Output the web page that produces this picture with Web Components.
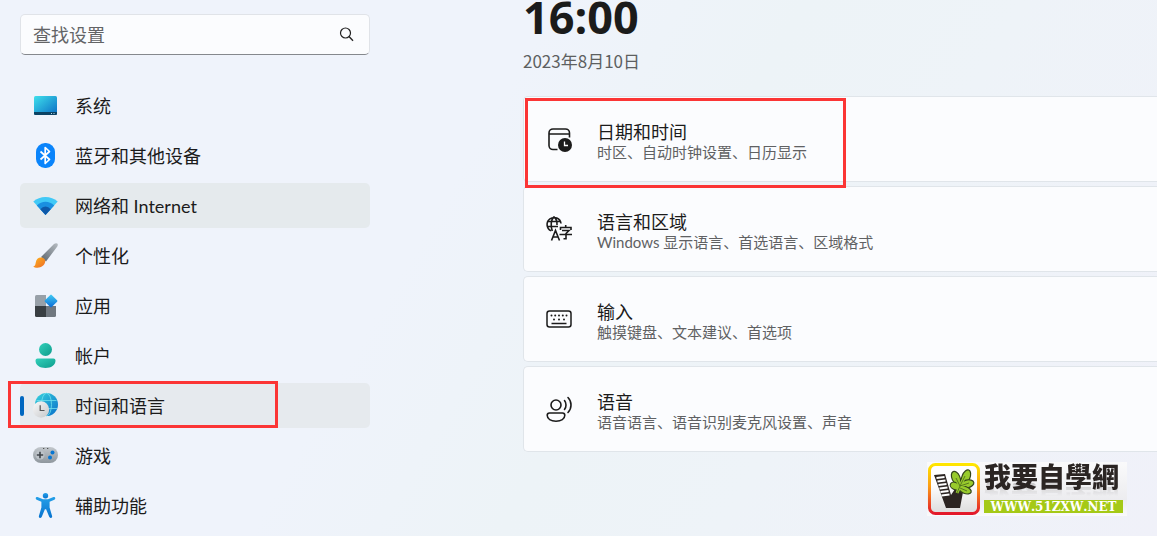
<!DOCTYPE html>
<html lang="zh-CN">
<head>
<meta charset="utf-8">
<title>设置 - 时间和语言</title>
<style>
html { min-height: 100%; background: linear-gradient(120deg, #eff3fb 0%, #eff3fb 38%, #edf3f7 55%, #eef3f8 70%, #f0f1f9 100%); }
body { margin: 0; font-family: "Noto Sans CJK SC", sans-serif; color: #1b1b1b; }
</style>
</head>
<body>
<settings-app></settings-app>
<script>
const icons = {
  system: `<svg viewBox="0 0 25 25"><defs><linearGradient id="a" x1="0" y1="0" x2="1" y2="1"><stop stop-color="#3fe0ec"/><stop offset="1" stop-color="#0a6cc4"/></linearGradient></defs><rect x="1" y="3" width="23" height="19" rx="1.5" fill="url(#a)"/><path d="M1 19h23v1.5a1.5 1.5 0 0 1-1.500 1.500h-20A1.500 1.500 0 0 1 1 20.500z" fill="#0c4263"/><path d="M18 20.500h1M20.500 20.500h1" stroke="#b6dcf0"/></svg>`,
  bluetooth: `<svg viewBox="0 0 25 25"><rect x="3" y="0" width="19" height="25" rx="9" fill="#0a84fb"/><path d="M7.500 8.500l9 8-4.300 4V4.500l4.300 4-9 8" fill="none" stroke="#fff" stroke-width="1.700" stroke-linejoin="round"/></svg>`,
  network: `<svg viewBox="0 0 25 25"><path d="M12.500 22L.3 8.600Q5.500 4 12.500 4t12.200 4.600z" fill="#41c9f6"/><path d="M12.500 22L3.800 12.400Q7.800 8.800 12.500 8.800t8.700 3.600z" fill="#1a8fe0"/><path d="M12.500 22L7.300 16.200Q9.500 13.600 12.500 13.600t5.200 2.600z" fill="#0e58a8"/></svg>`,
  brush: `<svg viewBox="0 0 25 25"><defs><linearGradient id="b" x1="1" y1="0" x2="0" y2="1"><stop stop-color="#b6bcc2"/><stop offset="1" stop-color="#5c656e"/></linearGradient><linearGradient id="c" x1="0" y1="0" x2="1" y2="1"><stop stop-color="#ffb51c"/><stop offset="1" stop-color="#ec6b28"/></linearGradient></defs><path d="M8 14L21 1Q23-.3 24.200.6T24.300 3.500L13 18.500z" fill="url(#b)"/><path d="M12.200 18.500c-.6 4-4 6.200-7.700 6.200-2 0-3.500-.5-4.300-1.300 2-.4 2.200-1.700 2.500-3.700.4-3.500 2.800-5.300 5.300-5.200 2.500.1 4.500 1.700 4.200 4z" fill="url(#c)"/></svg>`,
  apps: `<svg viewBox="0 0 25 25"><defs><linearGradient id="d" x1="0" y1="0" x2="1" y2="1"><stop stop-color="#43cdf5"/><stop offset="1" stop-color="#0868d4"/></linearGradient></defs><path d="M3.500 2H13v11H2V3.500A1.500 1.500 0 0 1 3.500 2z" fill="#98a0a8"/><path d="M2 13h11v11H3.500A1.500 1.500 0 0 1 2 22.500z" fill="#393e42"/><path d="M13 13h10v9.500a1.500 1.500 0 0 1-1.500 1.500H13z" fill="#70777f"/><rect x="13.200" y="3.200" width="9.600" height="9.600" rx="1" transform="rotate(45 18 8)" fill="url(#d)"/></svg>`,
  account: `<svg viewBox="0 0 25 25"><defs><linearGradient id="e" x1="0" y1="0" x2="1" y2="1"><stop stop-color="#32d0ba"/><stop offset="1" stop-color="#0e9c8c"/></linearGradient></defs><circle cx="12.500" cy="6.500" r="6.500" fill="url(#e)"/><path d="M4.500 15.500h16a2 2 0 0 1 2 2c0 4.800-4.500 7.500-10 7.500s-10-2.700-10-7.500a2 2 0 0 1 2-2z" fill="url(#e)"/></svg>`,
  time: `<svg viewBox="0 0 25 25"><defs><linearGradient id="f" x1="0" y1="0" x2="1" y2="1"><stop stop-color="#38d3dd"/><stop offset="1" stop-color="#0870ca"/></linearGradient><linearGradient id="g" x1="0" y1="0" x2="1" y2="1"><stop stop-color="#fafafa"/><stop offset="1" stop-color="#c6c8ca"/></linearGradient></defs><circle cx="13.500" cy="11.500" r="11.500" fill="url(#f)"/><g fill="none" stroke="#70e1ee" stroke-width=".8"><ellipse cx="13.500" cy="11.500" rx="5" ry="11.300"/><path d="M3.500 7.500h20M3 15.500h21"/></g><circle cx="8" cy="16.500" r="8.200" fill="url(#g)"/><path d="M7.200 12.300v5.200h4.300" fill="none" stroke="#555" stroke-width="1.200"/></svg>`,
  game: `<svg viewBox="0 0 25 25"><defs><linearGradient id="h" x1="0" y1="0" x2="0" y2="1"><stop stop-color="#c2c7cc"/><stop offset="1" stop-color="#8f979e"/></linearGradient></defs><rect x="0" y="4" width="25" height="16" rx="8" fill="url(#h)"/><circle cx="7" cy="12" r="4.500" fill="#bdc3c9"/><path d="M7 8.800v6.400M3.800 12h6.400" stroke="#40464b" stroke-width="1.600"/><path d="M10 5.500h1.300M14 5.500h1.300" stroke="#555"/><circle cx="19.500" cy="9.500" r="2" fill="#0876d2"/><circle cx="17" cy="14.500" r="2" fill="#0876d2"/></svg>`,
  access: `<svg viewBox="0 0 25 25"><defs><linearGradient id="i" x1="0" y1="0" x2="0" y2="1"><stop stop-color="#249fe8"/><stop offset="1" stop-color="#0873cf"/></linearGradient></defs><g fill="url(#i)"><circle cx="12.500" cy="2.700" r="2.700"/><path d="M4.500 4.100L10 6.300h5l5.500-2.200c1.800-.6 2.500 1.900.9 2.600L16.600 8.700v5.800l2.500 8.400c.5 2-2.200 2.800-2.900.9l-3.100-7.600h-1.200l-3.100 7.600c-.7 1.900-3.400 1.100-2.900-.9l2.500-8.400V8.700L3.600 6.700C2 6 2.700 3.500 4.500 4.100z"/></g></svg>`,
  date: `<svg viewBox="0 0 26 26"><g fill="none" stroke="#1b1b1b" stroke-width="1.600"><path d="M11.500 23.500H7a4 4 0 0 1-4-4V7a4 4 0 0 1 4-4h12.500a4 4 0 0 1 4 4v4.500M3 8h20.500"/></g><circle cx="19" cy="19" r="7" fill="#1b1b1b"/><path d="M18.500 15.500v4H22" fill="none" stroke="#fff" stroke-width="1.300"/></svg>`,
  region: `<svg viewBox="0 0 26 26"><g fill="none" stroke="#1b1b1b" stroke-width="1.600"><path d="M5 14.800A7 7 0 1 1 15 7.500M1 5.500h13.500M1 10.500h11M6.300 15C4.300 10 5 3 8 1c2.300 1.800 3.200 5 3 8M5.500 24.500L9.500 14.500l4 10M6.900 21h5.200M14.500 14v-2.500h10.500V14M19.700 9v2.500M16 14.500h7l-3 3v5.300h-2.500M13.500 18.500H26"/></g></svg>`,
  keyboard: `<svg viewBox="0 0 26 26"><rect x="1" y="5" width="24" height="16" rx="2.500" fill="none" stroke="#1b1b1b" stroke-width="1.500"/><g fill="#1b1b1b"><circle cx="5.500" cy="9.500" r="1"/><circle cx="9.200" cy="9.500" r="1"/><circle cx="13" cy="9.500" r="1"/><circle cx="16.800" cy="9.500" r="1"/><circle cx="20.500" cy="9.500" r="1"/><circle cx="8" cy="13.500" r="1"/><circle cx="13" cy="13.500" r="1"/><circle cx="18" cy="13.500" r="1"/></g><path d="M5.500 17.500h15" stroke="#1b1b1b" stroke-width="1.500"/></svg>`,
  voice: `<svg viewBox="0 0 26 26"><g fill="none" stroke="#1b1b1b" stroke-width="1.600" stroke-linecap="round"><circle cx="10" cy="9" r="5"/><path d="M3.500 17h13c1.500 0 2.300 1 2.300 2.300 0 3.700-3.800 5.900-8.800 5.900s-8.800-2.200-8.800-5.900C1.200 18 2 17 3.500 17zM18.500 4.500c2 2.500 2 6.500 0 9M22 1.500c4 4 4 11 0 15"/></g></svg>`,
  search: `<svg viewBox="0 0 15 15"><circle cx="6.500" cy="6" r="5" fill="none" stroke="#222" stroke-width="1.200"/><path d="M10 9.500l4 4.300" stroke="#222" stroke-width="1.300"/></svg>`,
  sprout: `<svg viewBox="0 0 52 52"><defs><linearGradient id="j" x1="0" y1="0" x2="0" y2="1"><stop stop-color="#ffe600"/><stop offset=".45" stop-color="#fb9b16"/><stop offset="1" stop-color="#e3192b"/></linearGradient><linearGradient id="k" x1="0" y1="0" x2="0" y2="1"><stop offset=".4" stop-color="#fff"/><stop offset="1" stop-color="#dcdcdc"/></linearGradient></defs><rect x="1.500" y="1.500" width="49" height="49" rx="6" fill="url(#k)" stroke="url(#j)" stroke-width="3"/><path d="M6 12l11-1 6 21 4-6 8 3-3 16H18z" fill="#2c2522"/><g stroke="#fff" stroke-width="2"><path d="M8.500 15l8-1M9.500 18.500l8-1M10.500 22l8-1M11.500 25.500l8-1M12.500 29l8-1M13.500 32.500l8-1"/></g><g fill="#98cb2c" stroke="#33451a" stroke-width="1.200"><ellipse cx="28" cy="15" rx="4" ry="7" transform="rotate(-24 28 15)"/><ellipse cx="38" cy="14" rx="4" ry="7.500" transform="rotate(22 38 14)"/><ellipse cx="39" cy="21" rx="7" ry="4" transform="rotate(-14 39 21)"/><ellipse cx="37" cy="27" rx="6.500" ry="3.500" transform="rotate(20 37 27)"/><ellipse cx="27" cy="23" rx="5" ry="3.500" transform="rotate(25 27 23)"/></g><path d="M29 30l3-7 6-12M32 23l-5-10M32 23l10-3M32 25l8 3M31 26l-6-4" stroke="#98cb2c" stroke-width="3" fill="none"/><path d="M29 30l3-7 5-10M32 23l-4-8M32 23l9-3M32 25l7 3" stroke="#48651c" stroke-width=".8" fill="none"/></svg>`
};

function define(name, markup) {
  customElements.define(name, class extends HTMLElement {
    connectedCallback() {
      if (this.shadowRoot) return;
      this.attachShadow({ mode: 'open' }).innerHTML = markup(this);
    }
  });
}

define('ui-icon', el => `<style>:host{display:block;flex:none}svg{display:block;width:100%;height:100%;overflow:visible}</style>${icons[el.getAttribute('name')]}`);

define('highlight-frame', () => `<style>:host{position:absolute;z-index:2;box-sizing:border-box;border:3px solid #fb3535;pointer-events:none}</style>`);

define('search-box', () => `<style>
:host{display:block}
label{display:flex;align-items:center;height:41px;box-sizing:border-box;padding:0 15px 0 12px;background:#fbfcfe;border:1px solid #e0e3e8;border-bottom-color:#85888d;border-radius:5px}
input{flex:1;min-width:0;padding:0 0 2px;border:0;outline:0;background:none;font:18px/24px "Noto Sans CJK SC",sans-serif;color:#1b1b1b}
input::placeholder{color:#636466;opacity:1}
ui-icon{width:15px;height:15px}
</style><label><input type="text" placeholder="查找设置" aria-label="查找设置"><ui-icon name="search"></ui-icon></label>`);

define('nav-item', el => `<style>
:host{display:block;position:relative}
a{display:flex;align-items:center;gap:17px;height:45px;padding-left:13px;border-radius:5px;color:inherit;text-decoration:none;font:18px/24px Lato,"Noto Sans CJK SC",sans-serif;position:relative}
:host([hovered]) a{background:#e5eaed}
:host([current]) a{background:#e6eaee}
:host([current]) a::before{content:"";position:absolute;left:0;top:13px;width:4px;height:20px;border-radius:2px;background:#0067c0}
ui-icon{width:25px;height:25px}
</style><a href="#"${el.hasAttribute('current') ? ' aria-current="page"' : ''}><ui-icon name="${el.getAttribute('icon')}"></ui-icon><span><slot></slot></span></a><slot name="mark"></slot>`);

define('setting-card', el => `<style>
:host{display:block;position:relative}
a{display:flex;align-items:center;gap:25px;height:86px;box-sizing:border-box;padding:0 22px;background:#fbfcfe;border:1px solid #e0e5ea;border-right:0;border-radius:5px 0 0 5px;color:inherit;text-decoration:none}
ui-icon{width:26px;height:26px}
.words{padding-top:4px}
.title,.note{display:block}
.title{font-size:18px;line-height:22px}
.note{font:15px/20px Lato,"Noto Sans CJK SC",sans-serif;color:#606163}
</style><a href="#"><ui-icon name="${el.getAttribute('icon')}"></ui-icon><span class="words"><span class="title"><slot></slot></span><span class="note"><slot name="note"></slot></span></span></a><slot name="mark"></slot>`);

define('clock-header', () => `<style>
:host{display:block}
time{display:block}
.clock{font:700 45px/34px "Open Sans",sans-serif}
.date{margin-top:15px;font-size:17px;line-height:24px;color:#5d5f61}
</style><time class="clock">16:00</time><time class="date" datetime="2023-08-10">2023年8月10日</time>`);

define('site-badge', () => `<style>
:host{display:flex;gap:4px;box-sizing:border-box;width:200px;height:54px;padding:1px;background:linear-gradient(#fafafb,#ececef 70%,#fafafb)}
ui-icon{width:52px;height:52px}
.name{display:block;font-size:27px;font-weight:900;line-height:26px;color:#2b2523;white-space:nowrap;-webkit-box-reflect:below -6px linear-gradient(transparent 50%,rgba(0,0,0,.2))}
.site{display:block;position:relative;margin-top:11px;width:139px;height:13px;background:#a5c916;color:#fff;font:bold 17px/11px "DejaVu Serif",serif;font-variant-caps:all-small-caps;text-align:center;white-space:nowrap}
</style><ui-icon name="sprout"></ui-icon><span class="words"><span class="name">我要自學網</span><span class="site">www.51zxw.NET</span></span>`);

define('settings-app', () => `<style>
:host{display:flex;position:relative;min-height:536px;overflow:hidden}
aside{flex:0 0 350px;padding:14px 0 7px 20px;box-sizing:content-box}
nav{display:grid;gap:5px;margin-top:28px}
main{flex:1;min-width:0;padding-left:153px}
.cards{display:grid;gap:4px;margin-top:23px}
.nav-mark{left:-12px;top:-2px;width:270px;height:47px}
.card-mark{left:2px;top:2px;width:321px;height:90px}
setting-card:first-child{z-index:1}
site-badge{position:absolute;right:30px;bottom:20px}
</style>
<aside><search-box></search-box><nav>
<nav-item icon="system">系统</nav-item>
<nav-item icon="bluetooth">蓝牙和其他设备</nav-item>
<nav-item icon="network" hovered>网络和 Internet</nav-item>
<nav-item icon="brush">个性化</nav-item>
<nav-item icon="apps">应用</nav-item>
<nav-item icon="account">帐户</nav-item>
<nav-item icon="time" current>时间和语言<highlight-frame slot="mark" class="nav-mark"></highlight-frame></nav-item>
<nav-item icon="game">游戏</nav-item>
<nav-item icon="access">辅助功能</nav-item>
</nav></aside>
<main><clock-header></clock-header><div class="cards">
<setting-card icon="date">日期和时间<span slot="note">时区、自动时钟设置、日历显示</span><highlight-frame slot="mark" class="card-mark"></highlight-frame></setting-card>
<setting-card icon="region">语言和区域<span slot="note">Windows 显示语言、首选语言、区域格式</span></setting-card>
<setting-card icon="keyboard">输入<span slot="note">触摸键盘、文本建议、首选项</span></setting-card>
<setting-card icon="voice">语音<span slot="note">语音语言、语音识别麦克风设置、声音</span></setting-card>
</div></main>
<site-badge></site-badge>`);
</script>
</body>
</html>
